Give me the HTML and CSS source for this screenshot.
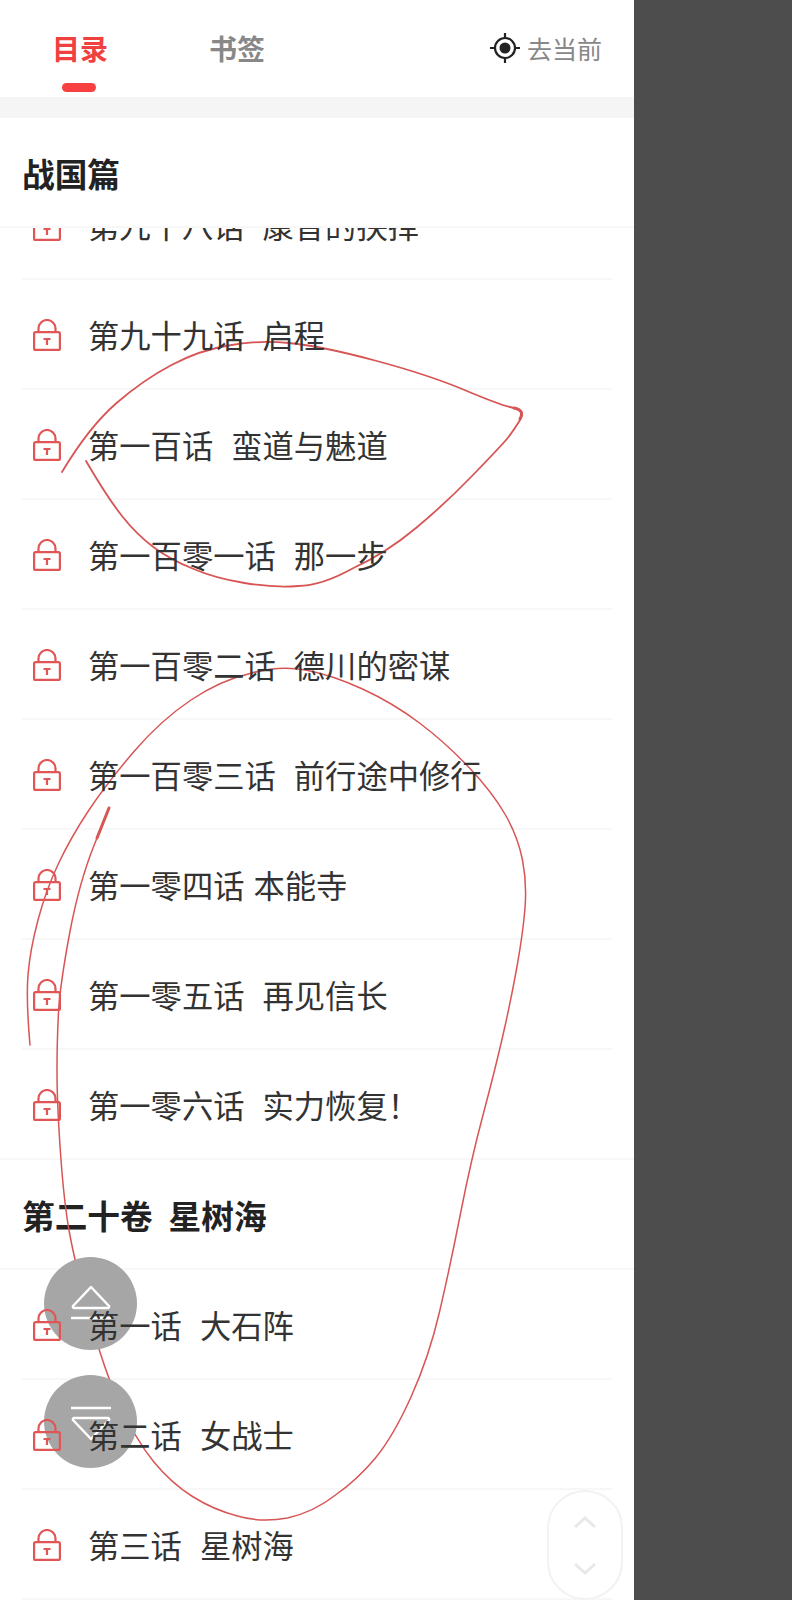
FILE: index.html
```html
<!DOCTYPE html>
<html lang="zh-CN">
<head>
    <meta charset="UTF-8">
    <meta name="viewport" content="width=device-width, initial-scale=1.0">
    <title>目录</title>
    <link rel="stylesheet" href="styles.css">
</head>
<body>

<svg width="0" height="0" class="defs">
    <symbol id="lock" viewBox="0 0 28 32">
        <path d="M5.5 14V9.5a8.5 8.5 0 0 1 17 0V14" fill="none" stroke="currentColor" stroke-width="2.2"/>
        <rect x="1.1" y="13.1" width="25.8" height="17.8" rx="1.5" fill="none" stroke="currentColor" stroke-width="2.2"/>
        <path d="M10.5 20h7M14 20v6" fill="none" stroke="currentColor" stroke-width="2.2"/>
    </symbol>
</svg>

<div class="panel">
    <div class="tabs">
        <div class="tab tab-active">目录</div>
        <div class="tab">书签</div>
        <div class="locate">
            <svg class="locate-icon" viewBox="0 0 32 32" width="32" height="32">
                <circle cx="16" cy="16" r="10" fill="none" stroke="#222" stroke-width="2.2"/>
                <circle cx="16" cy="16" r="5.5" fill="#222"/>
                <path d="M16 1v5M16 26v5M1 16h5M26 16h5" stroke="#222" stroke-width="2.2"/>
            </svg>
            <span>去当前</span>
        </div>
    </div>
    <div class="band"></div>
    <div class="section section-top">战国篇</div>

    <div class="list">
        <div class="list-inner">
            <div class="row"><svg class="lock"><use href="#lock"/></svg><span class="title">第九十八话&nbsp;&nbsp;康昔的抉择</span></div>
            <div class="row"><svg class="lock"><use href="#lock"/></svg><span class="title">第九十九话&nbsp;&nbsp;启程</span></div>
            <div class="row"><svg class="lock"><use href="#lock"/></svg><span class="title">第一百话&nbsp;&nbsp;蛮道与魅道</span></div>
            <div class="row"><svg class="lock"><use href="#lock"/></svg><span class="title">第一百零一话&nbsp;&nbsp;那一步</span></div>
            <div class="row"><svg class="lock"><use href="#lock"/></svg><span class="title">第一百零二话&nbsp;&nbsp;德川的密谋</span></div>
            <div class="row"><svg class="lock"><use href="#lock"/></svg><span class="title">第一百零三话&nbsp;&nbsp;前行途中修行</span></div>
            <div class="row"><svg class="lock"><use href="#lock"/></svg><span class="title">第一零四话 本能寺</span></div>
            <div class="row"><svg class="lock"><use href="#lock"/></svg><span class="title">第一零五话&nbsp;&nbsp;再见信长</span></div>
            <div class="row row-last"><svg class="lock"><use href="#lock"/></svg><span class="title">第一零六话&nbsp;&nbsp;实力恢复！</span></div>
            <div class="section">第二十卷&nbsp;&nbsp;星树海</div>
            <div class="row"><svg class="lock"><use href="#lock"/></svg><span class="title">第一话&nbsp;&nbsp;大石阵</span></div>
            <div class="row"><svg class="lock"><use href="#lock"/></svg><span class="title">第二话&nbsp;&nbsp;女战士</span></div>
            <div class="row"><svg class="lock"><use href="#lock"/></svg><span class="title">第三话&nbsp;&nbsp;星树海</span></div>
        </div>
    </div>

    <div class="float-btn float-up">
        <svg viewBox="0 0 44 40" width="44" height="40">
            <path d="M22 3 40 22a1.5 1.5 0 0 1-1 2H5a1.5 1.5 0 0 1-1-2z" fill="none" stroke="#fff" stroke-width="2.5" stroke-linejoin="round"/>
            <path d="M2 34h40" stroke="#fff" stroke-width="2.5"/>
        </svg>
    </div>
    <div class="float-btn float-down">
        <svg viewBox="0 0 44 40" width="44" height="40">
            <path d="M22 37 40 18a1.5 1.5 0 0 0-1-2H5a1.5 1.5 0 0 0-1 2z" fill="none" stroke="#fff" stroke-width="2.5" stroke-linejoin="round"/>
            <path d="M2 6h40" stroke="#fff" stroke-width="2.5"/>
        </svg>
    </div>

    <div class="scroller">
        <svg viewBox="0 0 24 14" width="24" height="14"><path d="M2 12 12 3l10 9" fill="none" stroke="#e8e8e8" stroke-width="3"/></svg>
        <svg viewBox="0 0 24 14" width="24" height="14"><path d="M2 2l10 9 10-9" fill="none" stroke="#e8e8e8" stroke-width="3"/></svg>
    </div>
</div>

<!-- hand drawn marks on top of the screenshot -->
<svg class="marks" viewBox="0 0 792 1600" width="792" height="1600">
    <path d="M62 472Q89 427 116 403.5Q143 380 171.5 365Q200 350 228.5 345.5Q257 340 289 343Q321 346 375 360.5Q429 375 464.5 390Q500 405 512 407.5Q526 410 520 420Q512 433 506 440Q500 447 473 475Q446 503 416 528Q386 553 353.5 568Q321 586 298 586Q275 588 244.5 583Q214 578 192.5 568.5Q171 560 154 547.5Q137 535 122 516Q107 497 86 461" class="mark mark-leaf"/>
    <path d="M514 408Q525 410 520 419" class="mark mark-thick"/>
    <path d="M30 1045Q26 1000 28 975Q30 950 38 920Q46 890 58.5 863.5Q71 837 89 810Q107 783 134 751.5Q161 720 191 700Q221 680 250 673.5Q279 665 305.5 670Q332 675 362.5 689Q393 703 419.5 723Q446 743 469.5 768Q493 793 505.5 815Q518 837 522.5 860Q527 883 525 908Q523 933 517 966.5Q511 1000 503 1035Q495 1070 483 1115Q471 1160 460.5 1213.5Q450 1267 439.5 1312Q429 1357 411 1397Q393 1437 375 1458.5Q357 1480 335.5 1495Q314 1512 287.5 1518Q261 1523 237.5 1516Q214 1510 192.5 1496.5Q171 1483 153.5 1461.5Q136 1440 120 1405Q104 1370 89.5 1316.5Q75 1263 69.5 1233Q64 1203 60.5 1153Q57 1103 57 1071.5Q57 1040 58.5 1012.5Q60 985 69.5 934Q79 883 94 845.5L109 808" class="mark"/>
    <path d="M97 838L109 808" class="mark mark-thick"/>
</svg>

</body>
</html>
```

FILE: styles.css
```css
* {
    box-sizing: border-box;
}

html, body {
    margin: 0;
    height: 1600px;
    overflow: hidden;
}

body {
    position: relative;
    width: 792px;
    background-color: #4d4d4d;
    font-family: "Noto Sans CJK SC", "Noto Sans", sans-serif;
    color: #222;
}

.defs {
    position: absolute;
}

.panel {
    position: relative;
    width: 634px;
    height: 1600px;
    background-color: #fff;
    overflow: hidden;
}

/* Tabs */
.tabs {
    display: flex;
    align-items: flex-start;
    height: 97px;
    padding: 0 32px 0 52px;
}

.tab {
    position: relative;
    width: 157px;
    padding-top: 27px;
    font-size: 28px;
    line-height: 42px;
    font-weight: 700;
    color: #888;
}

.tab-active {
    color: #f04040;
}

.tab-active::after {
    content: "";
    position: absolute;
    left: 10px;
    top: 83px;
    width: 34px;
    height: 9px;
    border-radius: 5px;
    background-color: #f84040;
}

.locate {
    display: flex;
    align-items: center;
    gap: 6px;
    margin-left: auto;
    padding-top: 32px;
    font-size: 25px;
    line-height: 32px;
    color: #888;
}

.locate span {
    margin-top: -1px;
}

.band {
    height: 21px;
    background-color: #f5f5f5;
}

/* Sections and rows */
.section {
    display: flex;
    align-items: center;
    height: 110px;
    padding-left: 22px;
    font-size: 32.7px;
    font-weight: 700;
    word-spacing: 0.5px;
    color: #222;
    border-bottom: 2px solid #f7f7f7;
}

.list {
    height: 1372px;
    overflow: hidden;
}

.list-inner {
    margin-top: -58px;
}

.row {
    display: flex;
    align-items: center;
    height: 110px;
    margin: 0 22px;
    padding-left: 11px;
    font-size: 31.3px;
    word-spacing: 2px;
    color: #333;
    border-bottom: 2px solid #f7f7f7;
}

.row-last {
    margin: 0;
    padding-left: 33px;
}

/* these stay above the floating buttons, the row lines stay below */
.title,
.lock {
    position: relative;
    z-index: 2;
}

.lock {
    width: 28px;
    height: 32px;
    margin-top: 2px;
    margin-right: 27px;
    flex: none;
    color: #e05555;
}

/* Floating buttons */
.float-btn {
    position: absolute;
    z-index: 1;
    left: 44px;
    display: flex;
    align-items: center;
    justify-content: center;
    width: 93px;
    height: 93px;
    border-radius: 50%;
    background-color: #a6a6a6;
}

.float-up {
    top: 1257px;
}

.float-down {
    top: 1375px;
}

.scroller {
    position: absolute;
    left: 547px;
    top: 1490px;
    display: flex;
    flex-direction: column;
    align-items: center;
    justify-content: space-between;
    width: 76px;
    height: 110px;
    padding: 23px 0 22px;
    border: 2px solid #f2f2f2;
    border-radius: 38px;
    background-color: #fff;
}

.marks {
    position: absolute;
    left: 0;
    top: 0;
    pointer-events: none;
}

.mark {
    fill: none;
    stroke: #d85555;
    stroke-width: 1.5;
    stroke-linecap: round;
}

.mark-leaf {
    stroke-width: 1.8;
}

.mark-thick {
    stroke-width: 3;
}
```
